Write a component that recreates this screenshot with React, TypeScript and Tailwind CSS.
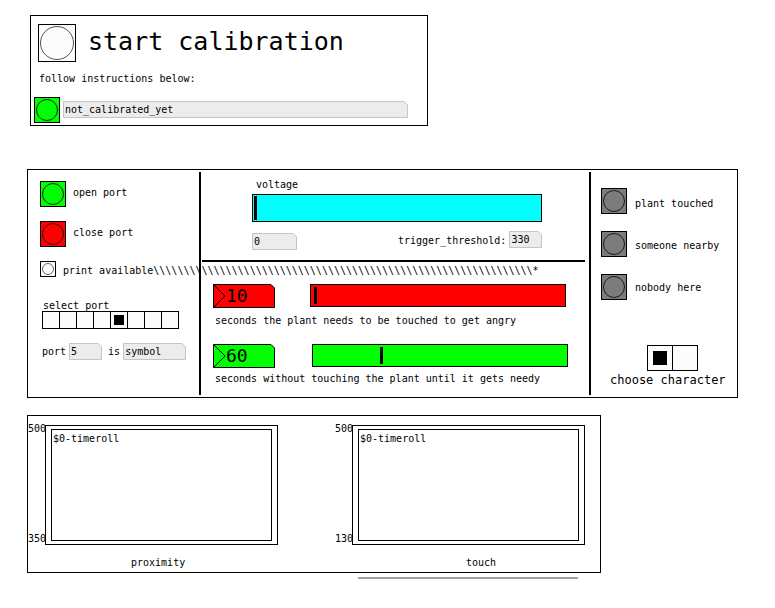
// App.tsx — Pd-style calibration patch

type BangProps = { className?: string; ring?: string };

function Bang({ className = '', ring = 'border-[#1a1a1a]' }: BangProps) {
  return (
    <div className={`shrink-0 border border-black p-[1px] ${className}`}>
      <div className={`h-full w-full rounded-full border ${ring}`} />
    </div>
  );
}

type AtomProps = {
  w: number;
  h: number;
  className?: string;
  fill?: string;
  stroke?: string;
  notch?: number;
  arrow?: boolean;
  textClass?: string;
  children?: React.ReactNode;
};

// number / symbol box with the clipped top-right corner
function Atom({
  w, h, className = '', fill = '#ececec', stroke = '#c4c4c4', notch = 4,
  arrow = false, textClass = 'pl-[2px] text-[10px] leading-[17px]', children,
}: AtomProps) {
  const pts = `0.5,0.5 ${w - notch},0.5 ${w - 0.5},${notch} ${w - 0.5},${h - 0.5} 0.5,${h - 0.5}`;
  return (
    <div className={`relative shrink-0 ${className}`}>
      <svg className="absolute inset-0" width={w} height={h}>
        <polygon points={pts} fill={fill} stroke={stroke} />
        {arrow && (
          <polyline points={`0.5,0.5 12,${h / 2} 0.5,${h - 0.5}`} fill="none" stroke="black" />
        )}
      </svg>
      <div className={`relative whitespace-nowrap ${textClass}`}>{children}</div>
    </div>
  );
}

function RadioCell({ selected, className = '', dot = '' }: { selected: boolean; className?: string; dot?: string }) {
  return (
    <div className={`flex shrink-0 items-center justify-center border border-black bg-[#fcfcfc] ${className}`}>
      {selected && <div className={`bg-black ${dot}`} />}
    </div>
  );
}

function Graph({ top, bottom, label, labelClass }: { top: string; bottom: string; label: string; labelClass: string }) {
  return (
    <div className="flex flex-col items-start">
      <div className="flex items-start">
        <div className="flex h-[122px] w-[17px] flex-col justify-between whitespace-nowrap">
          <span>{top}</span>
          <span>{bottom}</span>
        </div>
        <div className="mt-[2px] h-[120px] w-[233px] border border-black px-[5px] py-[3px]">
          <div className="h-full w-full border border-black pl-[1px] pt-[3px]">$0-timeroll</div>
        </div>
      </div>
      <span className={`mt-[12px] ${labelClass}`}>{label}</span>
    </div>
  );
}

export default function App() {
  const ports = [0, 1, 2, 3, 4, 5, 6, 7];
  const printLine = 'print available' + '\\'.repeat(63) + '*';

  return (
    <div className="flex h-[608px] w-[775px] flex-col items-start overflow-hidden bg-white font-['DejaVu_Sans_Mono',monospace] text-[10px] leading-[12px] text-black">

      {/* calibration header */}
      <div className="ml-[30px] mt-[15px] flex h-[111px] w-[398px] flex-col items-start border border-black">
        <div className="ml-[7px] mt-[8px] flex items-start">
          <Bang className="h-[38px] w-[38px] bg-[#fcfcfc]" ring="border-[#555]" />
          <span className="ml-[12px] mt-[5px] text-[25px] leading-[25px]">start calibration</span>
        </div>
        <span className="ml-[8px] mt-[11px]">follow instructions below:</span>
        <div className="ml-[3px] mt-[12px] flex items-start">
          <Bang className="h-[26px] w-[26px] bg-[#00ff00]" />
          <Atom w={345} h={17} className="ml-[3px] mt-[4px] h-[17px] w-[345px]">not_calibrated_yet</Atom>
        </div>
      </div>

      {/* main controls */}
      <div className="ml-[27px] mt-[43px] flex h-[229px] w-[711px] items-stretch border border-black">

        {/* port */}
        <div className="relative z-10 flex w-[171px] shrink-0 flex-col items-start">
          <div className="ml-[12px] mt-[11px] flex items-start">
            <Bang className="h-[26px] w-[26px] bg-[#00ff00]" />
            <span className="ml-[7px] mt-[6px]">open port</span>
          </div>
          <div className="ml-[12px] mt-[14px] flex items-start">
            <Bang className="h-[26px] w-[26px] bg-[#ff0000]" />
            <span className="ml-[7px] mt-[6px]">close port</span>
          </div>
          <div className="ml-[12px] mt-[14px] flex items-start">
            <Bang className="h-[16px] w-[16px] bg-[#fcfcfc]" ring="border-[#666]" />
            <span className="ml-[7px] mt-[4px] whitespace-nowrap">{printLine}</span>
          </div>
          <span className="ml-[15px] mt-[23px]">select port</span>
          <div className="-mt-[1px] ml-[14px] flex">
            {ports.map(i => (
              <RadioCell
                key={i}
                selected={i === 4}
                className={i === 0 ? 'h-[18px] w-[18px]' : '-ml-[1px] h-[18px] w-[18px]'}
                dot="h-[10px] w-[10px]"
              />
            ))}
          </div>
          <div className="ml-[14px] mt-[13px] flex h-[18px] items-center">
            <span className="mt-[1px]">port</span>
            <Atom w={33} h={17} className="ml-[3px] h-[17px] w-[33px]">5</Atom>
            <span className="ml-[6px] mt-[1px]">is</span>
            <Atom w={63} h={17} className="ml-[3px] mt-[1px] h-[17px] w-[63px]">symbol</Atom>
          </div>
        </div>

        <div className="my-[2px] w-[2px] shrink-0 bg-black" />

        {/* sensor */}
        <div className="flex w-[388px] shrink-0 flex-col items-start">
          <span className="ml-[55px] mt-[9px]">voltage</span>
          <div className="ml-[51px] mt-[3px] flex h-[28px] w-[290px] items-stretch border border-black bg-[#00ffff]">
            <div className="my-[1px] ml-[1px] w-[3px] bg-black" />
          </div>
          <div className="ml-[51px] mt-[9px] flex items-start">
            <Atom w={45} h={17} className="mt-[2px] h-[17px] w-[45px]">0</Atom>
            <span className="ml-[101px] mt-[4px]">trigger_threshold:</span>
            <Atom w={33} h={17} className="ml-[3px] h-[17px] w-[33px]">330</Atom>
          </div>
          <div className="ml-[1px] mt-[10px] h-[2px] w-[383px] bg-black" />

          <div className="ml-[12px] mt-[22px] flex items-start">
            <Atom
              w={62} h={24} fill="#ff0000" stroke="#000" arrow
              className="h-[24px] w-[62px]"
              textClass="pl-[13px] text-[18px] leading-[24px]"
            >
              10
            </Atom>
            <div className="ml-[35px] flex h-[23px] w-[256px] items-stretch border border-black bg-[#ff0000]">
              <div className="my-[2px] ml-[3px] w-[3px] bg-black" />
            </div>
          </div>
          <span className="ml-[14px] mt-[7px]">seconds the plant needs to be touched to get angry</span>

          <div className="ml-[12px] mt-[17px] flex items-start">
            <Atom
              w={62} h={24} fill="#00ff00" stroke="#000" arrow
              className="h-[24px] w-[62px]"
              textClass="pl-[13px] text-[18px] leading-[24px]"
            >
              60
            </Atom>
            <div className="ml-[37px] flex h-[23px] w-[256px] items-stretch border border-black bg-[#00ff00]">
              <div className="my-[2px] ml-[67px] w-[3px] bg-black" />
            </div>
          </div>
          <span className="ml-[14px] mt-[5px]">seconds without touching the plant until it gets needy</span>
        </div>

        <div className="my-[2px] w-[2px] shrink-0 bg-black" />

        {/* character state */}
        <div className="flex flex-1 flex-col items-start">
          <div className="ml-[10px] mt-[18px] flex items-start">
            <Bang className="h-[26px] w-[26px] bg-[#7c7c7c]" />
            <span className="ml-[8px] mt-[10px]">plant touched</span>
          </div>
          <div className="ml-[10px] mt-[17px] flex items-start">
            <Bang className="h-[26px] w-[26px] bg-[#7c7c7c]" />
            <span className="ml-[8px] mt-[9px]">someone nearby</span>
          </div>
          <div className="ml-[10px] mt-[17px] flex items-start">
            <Bang className="h-[26px] w-[26px] bg-[#7c7c7c]" />
            <span className="ml-[8px] mt-[8px]">nobody here</span>
          </div>
          <div className="ml-[56px] mt-[45px] flex">
            <RadioCell selected className="h-[26px] w-[26px]" dot="h-[14px] w-[14px]" />
            <RadioCell selected={false} className="-ml-[1px] h-[26px] w-[26px]" />
          </div>
          <span className="ml-[19px] mt-[2px] text-[12px] leading-[14px]">choose character</span>
        </div>
      </div>

      {/* timerolls */}
      <div className="ml-[27px] mt-[17px] flex h-[158px] w-[574px] items-start border border-black">
        <div className="mt-[7px]">
          <Graph top="500" bottom="350" label="proximity" labelClass="ml-[103px]" />
        </div>
        <div className="ml-[57px] mt-[7px]">
          <Graph top="500" bottom="130" label="touch" labelClass="ml-[131px]" />
        </div>
      </div>
      <div className="ml-[358px] mt-[4px] h-[2px] w-[220px] bg-[#a0a0a0]" />
    </div>
  );
}
